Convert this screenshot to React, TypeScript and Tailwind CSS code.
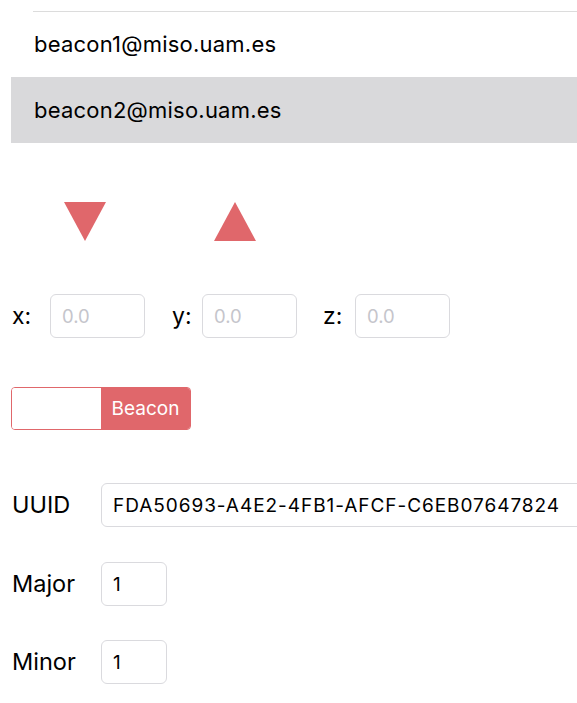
import React, { useState } from "react";

const accounts = ["beacon1@miso.uam.es", "beacon2@miso.uam.es"];

const CoordInput = ({ label, labelClass }: { label: string; labelClass: string }) => (
  <div className="flex items-center shrink-0">
    <span className={`text-[23px] text-black shrink-0 ${labelClass}`}>{label}</span>
    <input
      placeholder="0.0"
      className="w-[95px] h-[44px] rounded-[6px] border border-[#dadade] pl-[11px] text-[18.5px] placeholder:text-[#c5c5cb] outline-none"
    />
  </div>
);

const App = () => {
  const [selected] = useState(1);

  return (
    <div
      className="w-[577px] h-[703px] overflow-hidden bg-white text-black"
      style={{ fontFamily: "Inter, 'Liberation Sans', sans-serif" }}
    >
      {/* lista de cuentas */}
      <div className="pt-[11px]">
        {accounts.map((acc, i) => (
          <div
            key={acc}
            className={
              i === selected
                ? "ml-[11px] h-[66px] bg-[#d9d9db] flex items-center pl-[23px] text-[22px] tracking-[0.01em]"
                : "ml-[33px] h-[66px] border-t border-[#dcdcdc] flex items-center pl-[1px] text-[22px] tracking-[0.01em]"
            }
          >
            {acc}
          </div>
        ))}
      </div>

      {/* flechas */}
      <div className="flex mt-[59px] pl-[64px] gap-[108px]">
        <svg width="42" height="39" viewBox="0 0 42 39">
          <polygon points="0,0 42,0 21,39" fill="#e0676b" />
        </svg>
        <svg width="42" height="39" viewBox="0 0 42 39">
          <polygon points="21,0 42,39 0,39" fill="#e0676b" />
        </svg>
      </div>

      {/* coordenadas */}
      <div className="flex items-center mt-[53px] pl-[12px]">
        <CoordInput label="x:" labelClass="w-[38px]" />
        <div className="w-[27px] shrink-0" />
        <CoordInput label="y:" labelClass="w-[30px]" />
        <div className="w-[26px] shrink-0" />
        <CoordInput label="z:" labelClass="w-[32px]" />
      </div>

      {/* selector */}
      <div className="mt-[49px] ml-[11px] flex w-[180px] h-[43px] rounded-[4px] border border-[#e0676b] overflow-hidden">
        <div className="flex-1 bg-white" />
        <div className="flex-1 bg-[#e0676b] flex items-center justify-center pt-[2px] text-white text-[19px]">
          Beacon
        </div>
      </div>

      {/* datos beacon */}
      <div className="mt-[53px] flex items-center">
        <span className="w-[101px] shrink-0 pl-[12px] text-[23.5px]">UUID</span>
        <input
          defaultValue="FDA50693-A4E2-4FB1-AFCF-C6EB07647824"
          className="w-[490px] shrink-0 h-[44px] rounded-[6px] border border-[#dadade] pl-[11px] text-[19px] tracking-[0.05em] outline-none"
        />
      </div>
      <div className="mt-[35px] flex items-center">
        <span className="w-[101px] shrink-0 pl-[12px] text-[23.5px]">Major</span>
        <input
          defaultValue="1"
          className="w-[66px] h-[44px] rounded-[6px] border border-[#dadade] pl-[11px] text-[19px] outline-none"
        />
      </div>
      <div className="mt-[34px] flex items-center">
        <span className="w-[101px] shrink-0 pl-[12px] text-[23.5px]">Minor</span>
        <input
          defaultValue="1"
          className="w-[66px] h-[44px] rounded-[6px] border border-[#dadade] pl-[11px] text-[19px] outline-none"
        />
      </div>
    </div>
  );
};

export default App;
